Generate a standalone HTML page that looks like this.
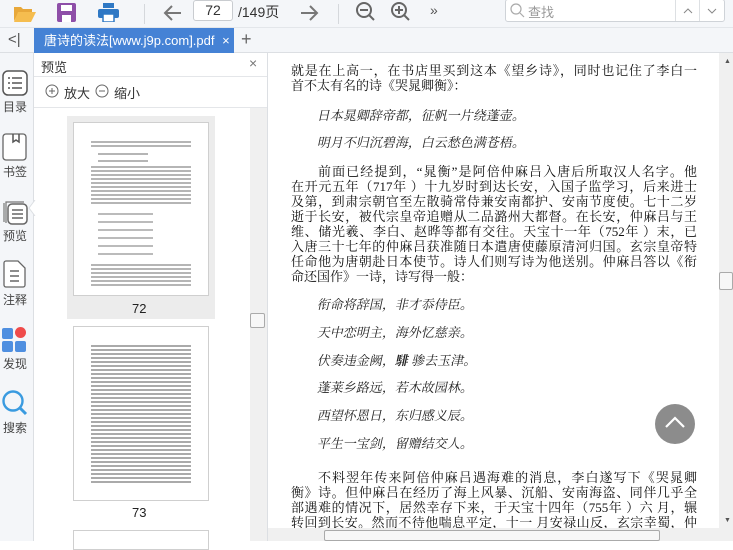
<!DOCTYPE html>
<html><head><meta charset="utf-8"><style>
*{margin:0;padding:0;box-sizing:border-box}
body{width:733px;height:541px;overflow:hidden;position:relative;background:#fff;font-family:"Liberation Sans","Noto Sans CJK SC",sans-serif;color:#333}
.a{position:absolute}
#tb{left:0;top:0;width:733px;height:28px;background:#f4f6f9;border-bottom:1px solid #e3e6ea}
#tabs{left:0;top:28px;width:733px;height:25px;background:#f4f6f9;border-bottom:1px solid #dcdfe3}
#side{left:0;top:53px;width:34px;height:488px;background:#f4f6f9;border-right:1px solid #dcdfe3}
.lbl{position:absolute;left:0;width:30px;text-align:center;font-size:12px;color:#444}
#pv{left:34px;top:53px;width:234px;height:488px;background:#fff;border-right:1px solid #dcdfe3}
.pg{position:absolute;background:#fff;border:1px solid #cfcfcf}
.tx{position:absolute;left:17px;right:17px;background:repeating-linear-gradient(#fff 0,#fff 1px,#b5b5b5 1px,#b5b5b5 3px,#fff 3px,#fff 4px)}
#doc{left:268px;top:53px;width:451px;height:475px;background:#fff;overflow:hidden;font-family:"Liberation Serif","Noto Serif CJK SC",serif;font-size:13px;color:#111}
.l{position:absolute;left:23px;width:406px;white-space:nowrap;text-align:justify;text-align-last:justify;line-height:15px}
.i{position:absolute;left:50px;white-space:nowrap;line-height:15px;font-family:"Noto Serif CJK SC",serif;transform:skewX(-12deg);color:#222}
</style></head><body>
<div id="tb" class="a">
 <svg class="a" style="left:13px;top:3px" width="24" height="20"><path d="M1 4h7l2 2h9v3H6L1 18z" fill="#e8a83a"/><path d="M5 9h18l-5 10H1z" fill="#f5bd4f"/></svg>
 <svg class="a" style="left:57px;top:3px" width="19" height="19"><rect x="0" y="0" width="19" height="19" rx="2" fill="#8e4fa8"/><rect x="4" y="2" width="11" height="6" fill="#fff"/><rect x="5" y="12" width="9" height="7" fill="#fff"/></svg>
 <svg class="a" style="left:98px;top:3px" width="21" height="19"><rect x="5" y="0" width="11" height="5" fill="#2f78c4"/><rect x="0" y="6" width="21" height="9" rx="2" fill="#2f78c4"/><rect x="5" y="11" width="11" height="8" fill="#fff" stroke="#2f78c4" stroke-width="1.5"/></svg>
 <div class="a" style="left:144px;top:4px;width:1px;height:20px;background:#d5d8dc"></div>
 <svg class="a" style="left:163px;top:4px" width="20" height="18"><path d="M18 9H3M9 2L2 9l7 7" stroke="#777" stroke-width="2" fill="none"/></svg>
 <div class="a" style="left:193px;top:0px;width:40px;height:21px;border:1px solid #c9ccd0;border-radius:3px;background:#fff;font-size:14px;text-align:center;line-height:19px">72</div>
 <div class="a" style="left:238px;top:2px;font-size:14px;color:#333">/149页</div>
 <svg class="a" style="left:299px;top:4px" width="20" height="18"><path d="M2 9h15M11 2l7 7-7 7" stroke="#777" stroke-width="2" fill="none"/></svg>
 <div class="a" style="left:338px;top:4px;width:1px;height:20px;background:#d5d8dc"></div>
 <svg class="a" style="left:355px;top:1px" width="22" height="22"><circle cx="9" cy="9" r="7" stroke="#666" stroke-width="2" fill="none"/><path d="M5 9h8M14 14l5 5" stroke="#666" stroke-width="2"/></svg>
 <svg class="a" style="left:390px;top:1px" width="22" height="22"><circle cx="9" cy="9" r="7" stroke="#666" stroke-width="2" fill="none"/><path d="M5 9h8M9 5v8M14 14l5 5" stroke="#666" stroke-width="2"/></svg>
 <div class="a" style="left:430px;top:2px;font-size:14px;color:#555">»</div>
 <div class="a" style="left:505px;top:-1px;width:220px;height:23px;border:1px solid #cfd3d8;border-radius:3px;background:#fff"></div>
 <svg class="a" style="left:510px;top:3px" width="15" height="15"><circle cx="6" cy="6" r="5" stroke="#aaa" stroke-width="1.2" fill="none"/><path d="M10 10l4 4" stroke="#aaa" stroke-width="1.2"/></svg>
 <div class="a" style="left:528px;top:2px;font-size:13px;color:#999">查找</div>
 <div class="a" style="left:675px;top:0;width:1px;height:21px;background:#dde0e3"></div>
 <div class="a" style="left:699px;top:0;width:1px;height:21px;background:#dde0e3"></div>
 <svg class="a" style="left:683px;top:7px" width="10" height="8"><path d="M1 6l4-4 4 4" stroke="#888" fill="none"/></svg>
 <svg class="a" style="left:707px;top:7px" width="10" height="8"><path d="M1 2l4 4 4-4" stroke="#888" fill="none"/></svg>
</div>
<div id="tabs" class="a">
 <div class="a" style="left:8px;top:3px;font-size:15px;color:#555">&lt;|</div>
 <div class="a" style="left:34px;top:0;width:200px;height:25px;background:#4582d5;color:#fff;font-size:13px;line-height:25px;padding-left:10px">唐诗的读法[www.j9p.com].pdf <span style="margin-left:4px">×</span></div>
 <div class="a" style="left:241px;top:1px;font-size:18px;color:#666">+</div>
</div>
<div id="side" class="a">
 <svg class="a" style="left:2px;top:17px" width="26" height="26"><rect x="1" y="1" width="24" height="24" rx="5" stroke="#555" stroke-width="1.5" fill="#fff"/><path d="M6 8h2M6 13h2M6 18h2M10 8h10M10 13h10M10 18h10" stroke="#555" stroke-width="1.5"/></svg>
 <div class="lbl" style="top:45px">目录</div>
 <svg class="a" style="left:2px;top:80px" width="26" height="28"><rect x="1" y="1" width="23" height="26" rx="3" stroke="#666" stroke-width="1.3" fill="#fff"/><path d="M11 1v8l3-2 3 2V1" stroke="#555" stroke-width="1.5" fill="none"/></svg>
 <div class="lbl" style="top:110px">书签</div>
 <svg class="a" style="left:2px;top:145px" width="28" height="28"><path d="M2 24V5M4 25V4h18" stroke="#777" stroke-width="1.2" fill="none"/><rect x="6" y="6" width="19" height="20" rx="4" stroke="#666" stroke-width="1.5" fill="#fff"/><path d="M10 12h11M10 16h11M10 20h11" stroke="#666" stroke-width="1.5"/></svg>
 <div class="lbl" style="top:174px">预览</div>
 <svg class="a" style="left:3px;top:207px" width="24" height="28"><path d="M1 3a2 2 0 012-2h12l7 7v17a2 2 0 01-2 2H3a2 2 0 01-2-2z" stroke="#666" stroke-width="1.3" fill="#fff"/><path d="M7 11h9M7 16h9M7 21h9" stroke="#666" stroke-width="1.5"/></svg>
 <div class="lbl" style="top:238px">注释</div>
 <div class="a" style="left:2px;top:275px;width:11px;height:11px;background:#4f8fe0;border-radius:2px"></div>
 <div class="a" style="left:15px;top:274px;width:11px;height:11px;background:#ef4b4b;border-radius:50%"></div>
 <div class="a" style="left:2px;top:288px;width:11px;height:11px;background:#4f8fe0;border-radius:2px"></div>
 <div class="a" style="left:15px;top:288px;width:11px;height:11px;background:#4f8fe0;border-radius:2px"></div>
 <div class="lbl" style="top:302px">发现</div>
 <svg class="a" style="left:1px;top:336px" width="28" height="28"><circle cx="12" cy="12" r="9.5" stroke="#3a9be0" stroke-width="2.4" fill="none"/><path d="M19 19l6 6" stroke="#3a9be0" stroke-width="3"/></svg>
 <div class="lbl" style="top:366px">搜索</div>
</div>
<svg class="a" style="left:28px;top:200px;z-index:3" width="8" height="16"><path d="M7 0L1 8l6 8" fill="#fff" stroke="#dcdfe3"/></svg>
<div id="pv" class="a">
 <div class="a" style="left:7px;top:4px;font-size:13px">预览</div>
 <div class="a" style="left:215px;top:2px;font-size:14px;color:#777">×</div>
 <div class="a" style="left:0;top:23px;width:233px;height:1px;background:#e4e6e9"></div>
 <svg class="a" style="left:11px;top:31px" width="14" height="14"><circle cx="7" cy="7" r="6" stroke="#666" fill="none"/><path d="M4 7h6M7 4v6" stroke="#666"/></svg>
 <div class="a" style="left:30px;top:30px;font-size:13px">放大</div>
 <svg class="a" style="left:61px;top:31px" width="14" height="14"><circle cx="7" cy="7" r="6" stroke="#666" fill="none"/><path d="M4 7h6" stroke="#666"/></svg>
 <div class="a" style="left:80px;top:30px;font-size:13px">缩小</div>
 <div class="a" style="left:0;top:54px;width:233px;height:1px;background:#e4e6e9"></div>
 <div class="a" style="left:216px;top:55px;width:17px;height:433px;background:#f0f0f0"></div>
 <div class="a" style="left:216px;top:260px;width:15px;height:15px;background:#f7f7f7;border:1px solid #aaa;border-radius:2px"></div>
 <div class="a" style="left:33px;top:63px;width:148px;height:203px;background:#ececec"></div>
 <div class="pg" style="left:39px;top:69px;width:136px;height:174px">
  <div class="tx" style="top:17px;height:8px"></div>
  <div class="tx" style="top:29px;height:3px;right:60px;left:24px"></div>
  <div class="tx" style="top:36px;height:3px;right:60px;left:24px"></div>
  <div class="tx" style="top:42px;height:40px"></div>
  <div class="tx" style="top:86px;height:52px;right:55px;left:24px;background:repeating-linear-gradient(#fff 0,#fff 4px,#bbb 4px,#bbb 6px,#fff 6px,#fff 8px)"></div>
  <div class="tx" style="top:140px;height:24px"></div>
 </div>
 <div class="a" style="left:98px;top:248px;font-size:13px;color:#222">72</div>
 <div class="pg" style="left:39px;top:273px;width:136px;height:175px">
  <div class="tx" style="top:17px;height:140px;background:repeating-linear-gradient(#fff 0,#fff 1px,#aaa 1px,#aaa 3px,#fff 3px,#fff 4px)"></div>
 </div>
 <div class="a" style="left:98px;top:452px;font-size:13px;color:#222">73</div>
 <div class="pg" style="left:39px;top:477px;width:136px;height:20px"></div>
</div>
<div id="doc" class="a">
 <div class="l" style="top:10px">就是在上高一，在书店里买到这本《望乡诗》，同时也记住了李白一</div>
 <div class="l" style="top:25px;text-align-last:left">首不太有名的诗《哭晁卿衡》：</div>
 <div class="i" style="top:54px">日本晁卿辞帝都，征帆一片绕蓬壶。</div>
 <div class="i" style="top:81px">明月不归沉碧海，白云愁色满苍梧。</div>
 <div class="l" style="top:111px;left:50px;width:379px">前面已经提到，“晁衡”是阿倍仲麻吕入唐后所取汉人名字。他</div>
 <div class="l" style="top:126px">在开元五年（717年 ）十九岁时到达长安，入国子监学习，后来进士</div>
 <div class="l" style="top:141px">及第，到肃宗朝官至左散骑常侍兼安南都护、安南节度使。七十二岁</div>
 <div class="l" style="top:156px">逝于长安，被代宗皇帝追赠从二品潞州大都督。在长安，仲麻吕与王</div>
 <div class="l" style="top:171px">维、储光羲、李白、赵晔等都有交往。天宝十一年（752年 ）末，已</div>
 <div class="l" style="top:186px">入唐三十七年的仲麻吕获准随日本遣唐使藤原清河归国。玄宗皇帝特</div>
 <div class="l" style="top:201px">任命他为唐朝赴日本使节。诗人们则写诗为他送别。仲麻吕答以《衔</div>
 <div class="l" style="top:216px;text-align-last:left">命还国作》一诗，诗写得一般：</div>
 <div class="i" style="top:243px">衔命将辞国，非才忝侍臣。</div>
 <div class="i" style="top:271px">天中恋明主，海外忆慈亲。</div>
 <div class="i" style="top:299px">伏奏违金阙，<b>騑</b> 骖去玉津。</div>
 <div class="i" style="top:326px">蓬莱乡路远，若木故园林。</div>
 <div class="i" style="top:354px">西望怀恩日，东归感义辰。</div>
 <div class="i" style="top:382px">平生一宝剑，留赠结交人。</div>
 <div class="l" style="top:417px;left:50px;width:379px">不料翌年传来阿倍仲麻吕遇海难的消息，李白遂写下《哭晁卿</div>
 <div class="l" style="top:432px">衡》诗。但仲麻吕在经历了海上风暴、沉船、安南海盗、同伴几乎全</div>
 <div class="l" style="top:447px">部遇难的情况下，居然幸存下来，于天宝十四年（755年 ）六 月，辗</div>
 <div class="l" style="top:462px">转回到长安。然而不待他喘息平定，十一 月安禄山反，玄宗幸蜀，仲</div>
 <div class="a" style="left:387px;top:351px;width:40px;height:40px;border-radius:50%;background:#8c8c8c"></div>
 <svg class="a" style="left:396px;top:362px" width="22" height="14"><path d="M2 12L11 3l9 9" stroke="#fff" stroke-width="2.2" fill="none"/></svg>
</div>
<div class="a" style="left:719px;top:53px;width:14px;height:475px;background:#f0f0f0"></div>
<div class="a" style="left:719px;top:272px;width:14px;height:18px;background:#f7f7f7;border:1px solid #aaa;border-radius:2px"></div>
<div class="a" style="left:724px;top:58px;font-size:7px;color:#555">▲</div>
<div class="a" style="left:724px;top:517px;font-size:7px;color:#555">▼</div>
<div class="a" style="left:268px;top:528px;width:465px;height:13px;background:#f0f0f0"></div>
<div class="a" style="left:324px;top:530px;width:336px;height:11px;background:#f7f7f7;border:1px solid #aaa;border-radius:2px"></div>
</body></html>
